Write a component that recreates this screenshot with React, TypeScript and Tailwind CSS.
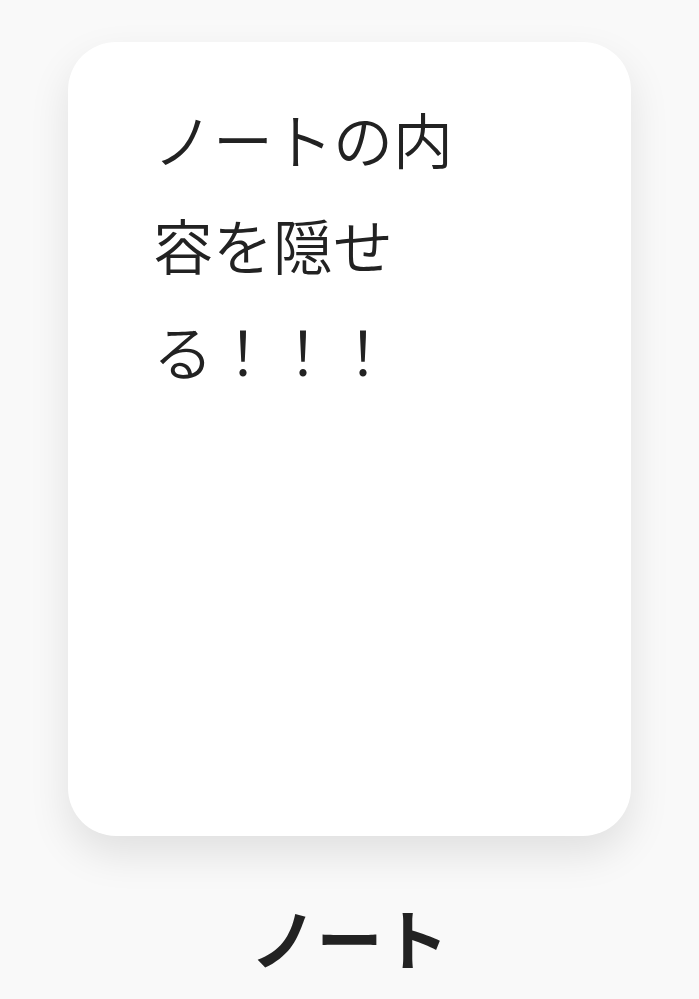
import React from 'react';

const jp = { fontFamily: '"Noto Sans CJK JP", "Noto Sans", sans-serif' };

export default function App() {
  return (
    <div className="w-[699px] h-[999px] bg-[#f9f9f9] flex flex-col items-center pt-[42px]" style={jp}>
      <div className="w-[563px] h-[794px] bg-white rounded-[48px] shadow-[0_18px_40px_rgba(0,0,0,0.10)] pl-[85px] pt-[43px]">
        <p className="w-[320px] text-[60px] leading-[106px] text-[#222] font-[350]">
          ノートの内容を隠せる！！！
        </p>
      </div>
      <div className="mt-[60px] text-[66px] leading-[80px] font-bold text-[#222]">ノート</div>
    </div>
  );
}
